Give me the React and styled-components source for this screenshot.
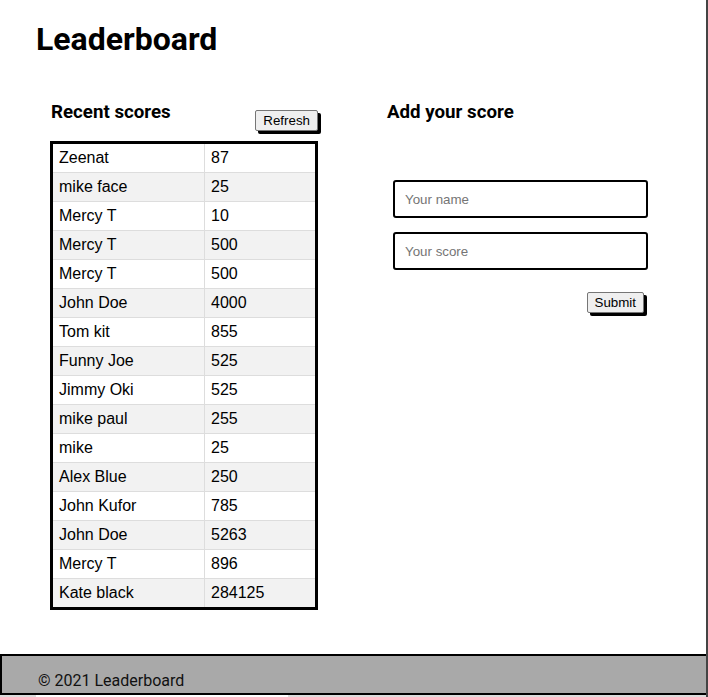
import React from 'react'
import styled, { createGlobalStyle } from 'styled-components'

const scores = [
    { name: 'Zeenat', score: 87 },
    { name: 'mike face', score: 25 },
    { name: 'Mercy T', score: 10 },
    { name: 'Mercy T', score: 500 },
    { name: 'Mercy T', score: 500 },
    { name: 'John Doe', score: 4000 },
    { name: 'Tom kit', score: 855 },
    { name: 'Funny Joe', score: 525 },
    { name: 'Jimmy Oki', score: 525 },
    { name: 'mike paul', score: 255 },
    { name: 'mike', score: 25 },
    { name: 'Alex Blue', score: 250 },
    { name: 'John Kufor', score: 785 },
    { name: 'John Doe', score: 5263 },
    { name: 'Mercy T', score: 896 },
    { name: 'Kate black', score: 284125 },
]

const App = () => {
    return (
        <>
            <GlobalStyle />
            <Page>
                <Header>
                    <Title>Leaderboard</Title>
                </Header>
                <Main>
                    <LeftSection>
                        <SectionHead>
                            <SectionTitle>Recent scores</SectionTitle>
                            <ShadowButton type="button" $top={9}>Refresh</ShadowButton>
                        </SectionHead>
                        <ScoreTable>
                            <tbody>
                                {scores.map((s, i) => (
                                    <Row key={i}>
                                        <NameCell>{s.name}</NameCell>
                                        <Cell>{s.score}</Cell>
                                    </Row>
                                ))}
                            </tbody>
                        </ScoreTable>
                    </LeftSection>
                    <RightSection>
                        <SectionTitle>Add your score</SectionTitle>
                        <ScoreForm onSubmit={e => e.preventDefault()}>
                            <Input type="text" placeholder="Your name" />
                            <Input type="number" placeholder="Your score" />
                            <SubmitRow>
                                <ShadowButton type="submit">Submit</ShadowButton>
                            </SubmitRow>
                        </ScoreForm>
                    </RightSection>
                </Main>
                <Footer>
                    <FooterText>© 2021 Leaderboard</FooterText>
                </Footer>
                <ScrollTrack>
                    <ScrollThumb />
                </ScrollTrack>
            </Page>
        </>
    )
}

export default App

const GlobalStyle = createGlobalStyle`
    html, body {
        margin: 0;
        padding: 0;
        overflow: hidden;
        background: white;
    }
    * {
        box-sizing: border-box;
    }
`
const Page = styled.div`
    width: 708px;
    height: 697px;
    display: flex;
    flex-direction: column;
    border-right: 2px solid #444;
    font-family: Roboto, "Liberation Sans", sans-serif;
    color: #000;
`
const Header = styled.header`
    padding: 21px 0 0 36px;
`
const Title = styled.h1`
    margin: 0;
    font-size: 32px;
    line-height: 37.5px;
    font-weight: 700;
`
const Main = styled.main`
    display: flex;
    margin-top: 42px;
    padding-left: 50px;
`
const LeftSection = styled.section`
    width: 268px;
`
const SectionHead = styled.div`
    display: flex;
    justify-content: space-between;
    align-items: flex-start;
    padding-left: 1px;
`
const SectionTitle = styled.h3`
    margin: 0;
    font-size: 18.72px;
    line-height: 22px;
    font-weight: 700;
`
const ShadowButton = styled.button`
    margin-top: ${p => p.$top || 0}px;
    font-family: "Liberation Sans", Arial, sans-serif;
    font-size: 13.33px;
    padding: 1px 7px;
    height: 21px;
    background: #efefef;
    border: 1px solid #767676;
    border-radius: 2px;
    color: #000;
    box-shadow: 3px 3px 0 #000;
`
const ScoreTable = styled.table`
    margin-top: 10px;
    width: 268px;
    border: 3px solid #000;
    border-collapse: collapse;
    font-family: "Liberation Sans", Arial, sans-serif;
    font-size: 16px;
`
const Row = styled.tr`
    &:nth-child(even) {
        background: #f2f2f2;
    }
`
const Cell = styled.td`
    border: 1px solid #ddd;
    padding: 5px 6px;
    line-height: 18px;
`
const NameCell = styled(Cell)`
    width: 153px;
`
const RightSection = styled.section`
    margin-left: 69px;
    width: 261px;
`
const ScoreForm = styled.form`
    margin: 57px 0 0 6px;
    display: flex;
    flex-direction: column;
    gap: 14px;
`
const Input = styled.input`
    width: 255px;
    height: 38px;
    border: 2px solid #000;
    border-radius: 3px;
    padding: 1px 10px 0;
    font-family: "Liberation Sans", Arial, sans-serif;
    font-size: 13.33px;
    &::placeholder {
        color: #757575;
    }
    &::-webkit-inner-spin-button {
        display: none;
    }
`
const SubmitRow = styled.div`
    display: flex;
    justify-content: flex-end;
    padding-right: 4px;
    margin-top: 8px;
`
const Footer = styled.footer`
    margin-top: auto;
    height: 41px;
    border: 2px solid #000;
    border-right: none;
    background: #a9a9a9;
    padding: 16px 0 0 36px;
`
const FooterText = styled.p`
    margin: 0;
    font-size: 16px;
    line-height: 18.75px;
    color: #111;
`
const ScrollTrack = styled.div`
    height: 2px;
    background: #dcdcdc;
    padding-left: 36px;
`
const ScrollThumb = styled.div`
    width: 252px;
    height: 2px;
    background: #fff;
`
